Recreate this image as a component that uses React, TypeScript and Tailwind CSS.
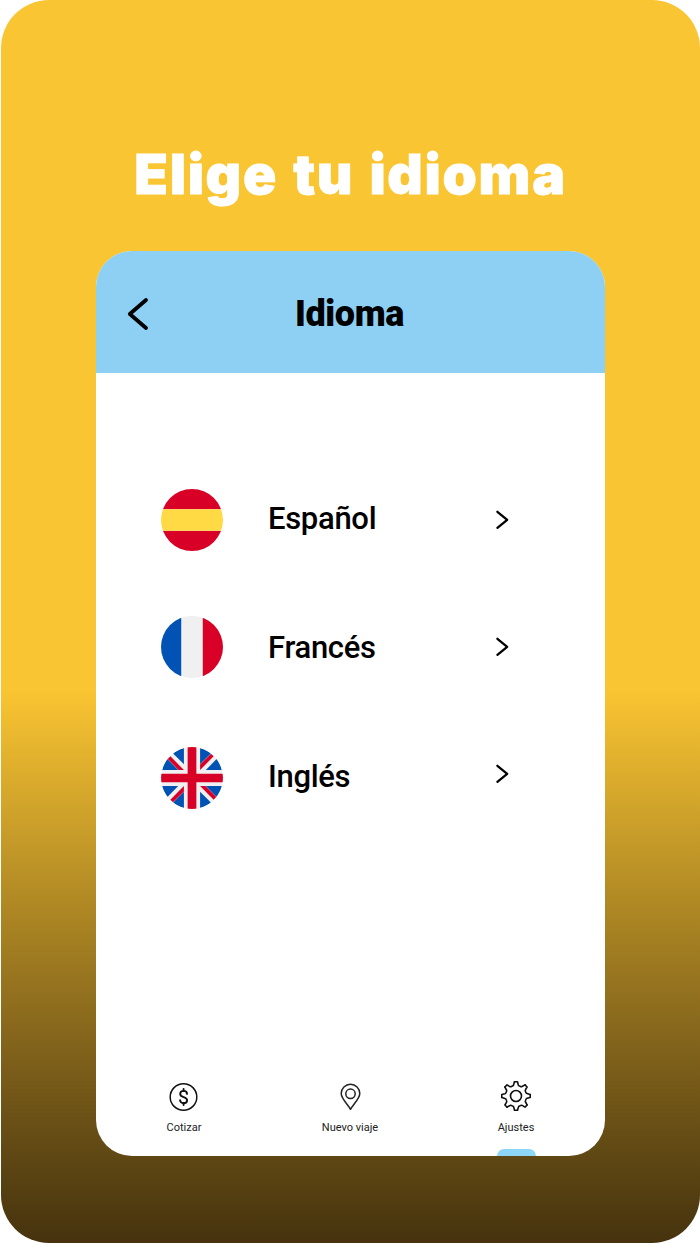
import React from "react";

const languages = [
  { code: "es", name: "Español" },
  { code: "fr", name: "Francés" },
  { code: "en", name: "Inglés" },
];

const SpainFlag = () => (
  <svg viewBox="0 0 512 512" className="h-[62px] w-[62px]">
    <clipPath id="es-clip">
      <circle cx="256" cy="256" r="256" />
    </clipPath>
    <g clipPath="url(#es-clip)">
      <path fill="#d80027" d="M0 0h512v167H0zM0 345h512v167H0z" />
      <path fill="#ffda44" d="M0 167h512v178H0z" />
    </g>
  </svg>
);

const FranceFlag = () => (
  <svg viewBox="0 0 512 512" className="h-[62px] w-[62px]">
    <clipPath id="fr-clip">
      <circle cx="256" cy="256" r="256" />
    </clipPath>
    <g clipPath="url(#fr-clip)">
      <path fill="#f0f0f0" d="M0 0h512v512H0z" />
      <path fill="#0052b4" d="M0 0h167v512H0z" />
      <path fill="#d80027" d="M345 0h167v512H345z" />
    </g>
  </svg>
);

const UkFlag = () => (
  <svg viewBox="0 0 512 512" className="h-[62px] w-[62px]">
    <clipPath id="en-clip">
      <circle cx="256" cy="256" r="256" />
    </clipPath>
    <g clipPath="url(#en-clip)">
      <path fill="#f0f0f0" d="M0 0h512v512H0z" />
      <path
        fill="#0052b4"
        d="M8.800 189.200c8.800-32.800 24-62.900 44.100-89.100l89.100 89.100zM503.200 189.200c-8.800-32.800-24-62.900-44.100-89.100L370 189.200zM8.800 322.800c8.800 32.800 24 62.900 44.100 89.100l89.100-89.100zM503.200 322.800c-8.800 32.800-24 62.900-44.100 89.100L370 322.800zM100.100 52.900c26.200-20.100 56.300-35.300 89.100-44.100V142zM411.900 52.900c-26.200-20.100-56.300-35.300-89.100-44.100V142zM100.100 459.100c26.200 20.100 56.300 35.300 89.100 44.100V370zM411.900 459.100c-26.200 20.100-56.300 35.300-89.100 44.100V370z"
      />
      <path
        fill="#d80027"
        d="M220 0h72v220h220v72H292v220h-72V292H0v-72h220zM322.800 322.800L435 435l22-22-90-90.200zM189.200 322.800L77 435l22 22 90.200-90zM189.200 189.200L77 77 55 99l90 90.200zM322.800 189.200L435 77l-22-22-90.200 90z"
      />
    </g>
  </svg>
);

const flags: Record<string, React.ReactNode> = {
  es: <SpainFlag />,
  fr: <FranceFlag />,
  en: <UkFlag />,
};

const ChevronRight = () => (
  <svg
    viewBox="0 0 14 20"
    className="h-5 w-3.5"
    fill="none"
    stroke="#000"
    strokeWidth="2.300"
    strokeLinecap="round"
    strokeLinejoin="round"
  >
    <path d="M2.400 1.800l9.800 8-9.800 8" />
  </svg>
);

const DollarIcon = () => (
  <svg
    viewBox="0 0 32 32"
    className="h-8 w-8"
    fill="none"
    stroke="#111"
    strokeWidth="1.500"
    strokeLinecap="round"
  >
    <circle cx="15.500" cy="17" r="13.300" />
    <path
      strokeWidth="1.900"
      d="M15.600 9v2M15.600 23v2M19 13.900c0-1.800-1.400-3-3.400-3s-3.400 1.200-3.400 3c0 4.200 6.900 2.200 6.900 6.300 0 1.800-1.500 3-3.500 3s-3.500-1.200-3.500-3"
    />
  </svg>
);

const PinIcon = () => (
  <svg
    viewBox="0 0 32 32"
    className="h-8 w-8"
    fill="none"
    stroke="#222"
    strokeWidth="1.500"
    strokeLinejoin="round"
  >
    <path d="M16.500 29.300C14 24.800 7.200 18.500 7.200 13.500a9.300 9.300 0 0 1 18.600 0C25.800 18.500 19 24.800 16.500 29.300z" />
    <circle cx="16.500" cy="13.800" r="4.700" />
  </svg>
);

const gearAngles = [0, 45, 90, 135, 180, 225, 270, 315];

const GearIcon = () => (
  <svg
    viewBox="-16 -16 32 32"
    className="h-8 w-8"
    fill="none"
    stroke="#111"
    strokeWidth="1.600"
    strokeLinecap="round"
    strokeLinejoin="round"
  >
    {gearAngles.map((angle) => (
      <path
        key={angle}
        transform={`rotate(${angle})`}
        d="M-1.500-14.200H1.500L2.300-11Q2.600-10.200 3.500-9.900L4.500-9.500Q5.300-9.100 6-9.500L8.980-11.100"
      />
    ))}
    <circle r="5.500" />
  </svg>
);

const tabs = [
  { label: "Cotizar", icon: <DollarIcon /> },
  { label: "Nuevo viaje", icon: <PinIcon /> },
  { label: "Ajustes", icon: <GearIcon />, active: true },
];

const App = () => {
  return (
    <div className="h-[1244px] w-[700px] bg-white pl-px font-[Roboto,sans-serif] text-black">
      <main className="flex h-[1243px] w-[699px] flex-col items-center rounded-[48px] bg-linear-to-b from-[#fac532] from-[690px] to-[#46330e] to-100%">
        <h1 className="mt-[138px] h-[113px] whitespace-nowrap font-[Inter,sans-serif] text-[55px] leading-[72px] font-black tracking-[1.7px] text-white [-webkit-text-stroke:0.8px_white] [word-spacing:2.5px]">
          Elige tu idioma
        </h1>

        <section className="flex h-[905px] w-[509px] flex-col overflow-hidden rounded-[36px] bg-white">
          <header className="grid h-[122px] shrink-0 grid-cols-[1fr_auto_1fr] items-center bg-[#8dd0f4] px-[31px] pt-[3px]">
            <svg
              viewBox="0 0 22 34"
              className="h-[34px] w-[22px]"
              fill="none"
              stroke="#000"
              strokeWidth="3.800"
              strokeLinecap="round"
              strokeLinejoin="round"
            >
              <path d="M19 3L2.800 17 19 31" />
            </svg>
            <h2 className="pr-0.5 text-[36px] leading-none font-black tracking-[-0.4px]">
              Idioma
            </h2>
          </header>

          <div className="flex flex-1 pl-[64.5px]">
            <div className="mt-[116px] flex w-[107.5px] flex-col">
              {languages.map(({ code }) => (
                <div key={code} className="mb-[65px] nth-[2]:mb-[69px]">
                  {flags[code]}
                </div>
              ))}
            </div>
            <ul className="mt-[126px] w-[227px] text-[31px] leading-10 font-medium tracking-[-0.3px]">
              {languages.map(({ code, name }) => (
                <li key={code} className="mb-[89px]">
                  {name}
                </li>
              ))}
            </ul>
            <div className="mt-[137px] flex flex-col gap-[107px]">
              {languages.map(({ code }) => (
                <ChevronRight key={code} />
              ))}
            </div>
          </div>

          <nav className="grid h-[76px] shrink-0 grid-cols-3 pr-1.5 pl-[5px]">
            {tabs.map(({ label, icon, active }) => (
              <div key={label} className="flex flex-col items-center">
                {icon}
                <span className="mt-[9px] text-[11px] leading-[14px] text-[#222]">
                  {label}
                </span>
                {active && (
                  <span className="mt-auto h-[7px] w-[39px] rounded-t-[10px] bg-[#8dd6f6]" />
                )}
              </div>
            ))}
          </nav>
        </section>
      </main>
    </div>
  );
};

export default App;
